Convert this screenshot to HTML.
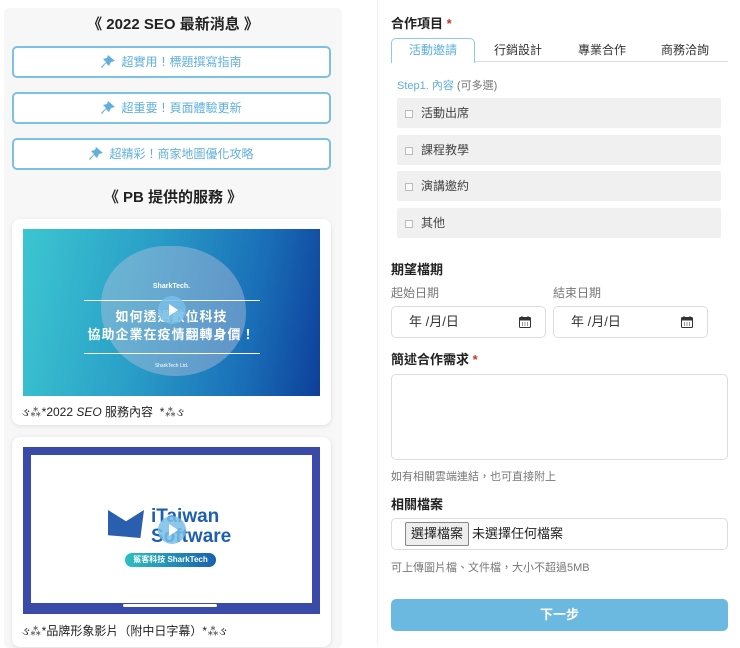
<!DOCTYPE html>
<html><head><meta charset="utf-8"><style>
*{box-sizing:border-box;margin:0;padding:0}
body{width:740px;height:644px;overflow:hidden;background:#fff;font-family:"Liberation Sans","Noto Sans CJK TC",sans-serif;position:relative;color:#333}
.abs{position:absolute}
.left{left:4px;top:8px;width:338px;height:640px;background:#f7f7f7;border-radius:6px}
.h{position:absolute;left:4px;width:338px;text-align:center;font-weight:bold;font-size:15px;color:#222}
.btn{position:absolute;left:12px;width:319px;height:32px;border:2px solid #7cc0e2;border-radius:5px;background:#fff;color:#5fb0db;font-size:12px;text-align:center;line-height:28px}
.btn svg{vertical-align:-2px;margin-right:6px}
.card{position:absolute;left:12px;width:319px;background:#fff;border-radius:8px;box-shadow:0 1px 4px rgba(0,0,0,.1)}
.cap{position:absolute;left:22px;font-size:12px;color:#222}
.play{position:absolute;width:28px;height:28px;border-radius:50%;background:rgba(120,190,230,.85)}
.play:after{content:"";position:absolute;left:11px;top:8px;border-left:9px solid #fff;border-top:6px solid transparent;border-bottom:6px solid transparent}
.vline{left:377px;top:0;width:1px;height:644px;background:#f0f0f0}
.lbl{position:absolute;left:391px;font-size:13px;font-weight:bold;color:#222}
.lbl b{color:#c0392b}
.tab{position:absolute;top:38px;font-size:12px;color:#333;text-align:center;width:84px;line-height:24px}
.opt{position:absolute;left:397px;width:324px;height:30px;background:#f0f0f0;border-radius:2px;font-size:12px;color:#444;line-height:30px;padding-left:8px}
.opt i{display:inline-block;width:8px;height:8px;border:1px solid #bbb;margin-right:8px;vertical-align:-1px;background:#fafafa}
.sm{position:absolute;font-size:11px;color:#777}
.date{position:absolute;top:306px;width:155px;height:32px;border:1px solid #ddd;border-radius:5px;font-size:13px;color:#333;line-height:30px;padding-left:17px}
.date svg{position:absolute;right:14px;top:9px}
</style></head><body>
<div class="abs left"></div>
<div class="h" style="top:13px">《 2022 SEO 最新消息 》</div>
<div class="btn" style="top:46px"><svg width="14" height="13" viewBox="0 0 14 13"><path d="M7 0L14 6L10 7L8 11L5 8L1 13L0 12L5 7L2 4L6 3Z" fill="#5fb0db"/></svg>超實用！標題撰寫指南</div>
<div class="btn" style="top:92px"><svg width="14" height="13" viewBox="0 0 14 13"><path d="M7 0L14 6L10 7L8 11L5 8L1 13L0 12L5 7L2 4L6 3Z" fill="#5fb0db"/></svg>超重要！頁面體驗更新</div>
<div class="btn" style="top:138px"><svg width="14" height="13" viewBox="0 0 14 13"><path d="M7 0L14 6L10 7L8 11L5 8L1 13L0 12L5 7L2 4L6 3Z" fill="#5fb0db"/></svg>超精彩！商家地圖優化攻略</div>
<div class="h" style="top:186px">《 PB 提供的服務 》</div>

<div class="card" style="top:219px;height:206px"></div>
<div class="abs" style="left:23px;top:229px;width:297px;height:167px;background:linear-gradient(100deg,#3cc6d0 0%,#2a9fc8 40%,#1a6fb8 75%,#0d3f9a 100%);overflow:hidden">
 <div class="abs" style="left:78px;top:17px;width:145px;height:130px;border-radius:45% 50% 48% 52%;background:rgba(180,190,220,.45)"></div>
 <div class="abs" style="left:0;width:297px;top:54px;text-align:center;color:#fff;font-size:7px;font-weight:bold">SharkTech.</div>
 <div class="abs" style="left:61px;top:71px;width:176px;height:1px;background:#fff"></div>
 <div class="abs" style="left:0;width:297px;top:79px;text-align:center;color:#fff;font-size:13px;font-weight:bold;line-height:18px;letter-spacing:1px">如何透過數位科技<br>協助企業在疫情翻轉身價！</div>
 <div class="abs" style="left:61px;top:124px;width:176px;height:1px;background:#fff"></div>
 <div class="abs" style="left:0;width:297px;top:134px;text-align:center;color:#fff;font-size:5px">SharkTech Ltd.</div>
</div>
<div class="play" style="left:158px;top:296px"></div>
<div class="cap" style="top:403px">ઙ⁂*2022 <i>SEO</i> 服務內容 &nbsp;*⁂ઙ</div>

<div class="card" style="top:437px;height:210px"></div>
<div class="abs" style="left:23px;top:447px;width:297px;height:167px;background:#3a4aa8">
 <div class="abs" style="left:8px;top:8px;width:281px;height:148px;background:#fff"></div>
 <div class="abs" style="left:85px;top:63px;width:36px;height:28px;background:#2a5fb0;clip-path:polygon(0 0,50% 40%,100% 0,90% 100%,0 90%)"></div>
 <div class="abs" style="left:128px;top:60px;font-size:19px;font-weight:bold;color:#1e5fb0;line-height:20px">iTaiwan<br>Software</div>
 <div class="abs" style="left:102px;top:106px;width:91px;height:14px;border-radius:7px;background:linear-gradient(90deg,#2cc0c0,#1a60b0);color:#fff;font-size:8px;text-align:center;line-height:14px;font-weight:bold">鯊客科技 SharkTech</div>
 <div class="abs" style="left:100px;top:157px;width:94px;height:3px;background:#fff;border-radius:2px"></div>
</div>
<div class="play" style="left:158px;top:516px"></div>
<div class="cap" style="top:622px">ઙ⁂*品牌形象影片（附中日字幕）*⁂ઙ</div>

<div class="abs vline"></div>
<div class="lbl" style="top:13px">合作項目 <b>*</b></div>
<div class="abs" style="left:391px;top:61px;width:337px;height:1px;background:#ddd"></div>
<div class="abs" style="left:391px;top:38px;width:84px;height:25px;border:1px solid #8ccbe8;border-bottom:none;border-radius:5px 5px 0 0;background:#fff"></div>
<div class="tab" style="left:391px;color:#5fb0db">活動邀請</div>
<div class="tab" style="left:476px">行銷設計</div>
<div class="tab" style="left:560px">專業合作</div>
<div class="tab" style="left:643px">商務洽詢</div>
<div class="sm" style="left:397px;top:77px;color:#5fb0db">Step1. 內容 <span style="color:#777">(可多選)</span></div>
<div class="opt" style="top:98px"><i></i>活動出席</div>
<div class="opt" style="top:135px"><i></i>課程教學</div>
<div class="opt" style="top:171px"><i></i>演講邀約</div>
<div class="opt" style="top:208px"><i></i>其他</div>
<div class="lbl" style="top:259px">期望檔期</div>
<div class="sm" style="left:391px;top:284px;font-size:12px">起始日期</div>
<div class="sm" style="left:553px;top:284px;font-size:12px">結束日期</div>
<div class="date" style="left:391px">年 /月/日<svg width="12" height="12" viewBox="0 0 12 12"><rect x="0.5" y="1.5" width="11" height="10" rx="1" fill="none" stroke="#333"/><rect x="0.5" y="1.5" width="11" height="3" fill="#333"/><path d="M3 0v2M9 0v2" stroke="#333"/><path d="M3 7h1M5.5 7h1M8 7h1M3 9h1M5.5 9h1M8 9h1" stroke="#333"/></svg></div>
<div class="date" style="left:553px">年 /月/日<svg width="12" height="12" viewBox="0 0 12 12"><rect x="0.5" y="1.5" width="11" height="10" rx="1" fill="none" stroke="#333"/><rect x="0.5" y="1.5" width="11" height="3" fill="#333"/><path d="M3 0v2M9 0v2" stroke="#333"/><path d="M3 7h1M5.5 7h1M8 7h1M3 9h1M5.5 9h1M8 9h1" stroke="#333"/></svg></div>
<div class="lbl" style="top:349px">簡述合作需求 <b>*</b></div>
<div class="abs" style="left:391px;top:374px;width:337px;height:86px;border:1px solid #ddd;border-radius:5px"></div>
<div class="sm" style="left:391px;top:468px">如有相關雲端連結，也可直接附上</div>
<div class="lbl" style="top:494px">相關檔案</div>
<div class="abs" style="left:391px;top:518px;width:337px;height:32px;border:1px solid #ddd;border-radius:5px;font-size:13px;line-height:30px;padding-left:80px;color:#222">未選擇任何檔案</div>
<div class="abs" style="left:405px;top:522px;width:64px;height:24px;border:1px solid #888;border-radius:2px;background:#eee;font-size:13px;line-height:22px;text-align:center;color:#222">選擇檔案</div>
<div class="sm" style="left:391px;top:559px">可上傳圖片檔、文件檔，大小不超過5MB</div>
<div class="abs" style="left:391px;top:599px;width:337px;height:32px;border-radius:5px;background:#6bb9e0;color:#fff;font-size:13px;font-weight:bold;text-align:center;line-height:32px">下一步</div>
</body></html>
